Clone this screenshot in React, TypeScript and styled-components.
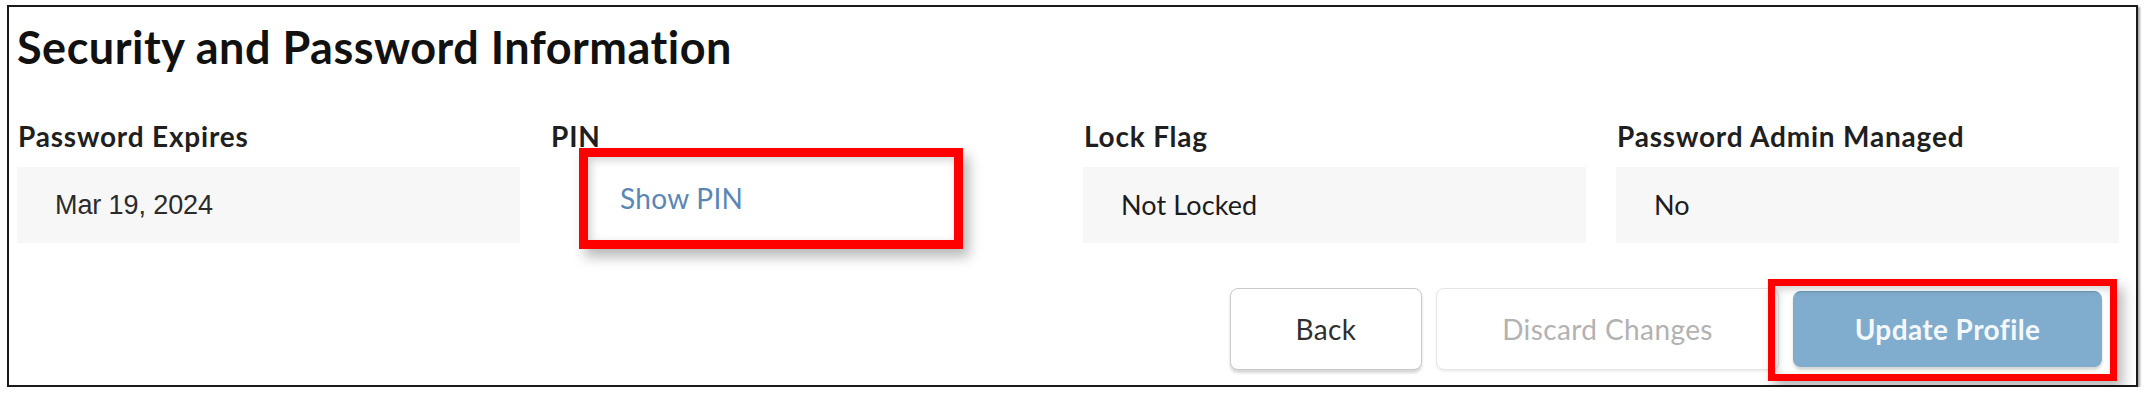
import React from 'react'
import styled, { createGlobalStyle } from 'styled-components'

const GlobalStyle = createGlobalStyle`
  html, body {
    margin: 0;
    padding: 0;
    background: #fff;
  }
  * {
    box-sizing: border-box;
  }
`

const Frame = styled.div`
  margin: 5px 0 0 7px;
  width: 2131px;
  height: 382px;
  border: 2px solid #1a1a1a;
  box-shadow: 2px 2px 2px rgba(0, 0, 0, 0.35);
  padding: 14px 17px 15px 8px;
  display: flex;
  flex-direction: column;
  font-family: Lato, "Noto Sans", sans-serif;
`

const Title = styled.h2`
  margin: 0;
  font-size: 45px;
  line-height: 52px;
  font-weight: 700;
  color: #111;
  letter-spacing: 0.5px;
`

const Fields = styled.div`
  display: grid;
  grid-template-columns: repeat(4, 1fr);
  column-gap: 30px;
  margin-top: 47px;
`

const Field = styled.div`
  display: flex;
  flex-direction: column;
  gap: 15px;
  position: relative;
`

const Label = styled.div`
  font-size: 28px;
  line-height: 32px;
  font-weight: 700;
  color: #1f1f1f;
  letter-spacing: 0.8px;
  padding-left: 1px;
`

const Value = styled.div<{ $arial?: boolean }>`
  height: 76px;
  background: #f7f7f7;
  display: flex;
  align-items: center;
  padding-left: 38px;
  font-family: ${p => (p.$arial ? '"Liberation Sans", Arial, sans-serif' : 'Lato, "Noto Sans", sans-serif')};
  font-size: 27px;
  line-height: 32px;
  color: ${p => (p.$arial ? '#2b2b2b' : '#1c1c1c')};
  letter-spacing: ${p => (p.$arial ? '-0.1px' : '0.1px')};
`

const PinValue = styled.div`
  height: 76px;
  position: relative;
  padding: 15px 0 0 70px;
`

const ShowPin = styled.a`
  font-size: 28px;
  line-height: 32px;
  color: #5a86b6;
  letter-spacing: 0.3px;
  text-decoration: none;
  cursor: pointer;
`

const Highlight = styled.div<{ $left: number; $top: number; $width: number; $height: number; $thick: number }>`
  position: absolute;
  left: ${p => p.$left}px;
  top: ${p => p.$top}px;
  width: ${p => p.$width}px;
  height: ${p => p.$height}px;
  border: ${p => p.$thick}px solid #ff0000;
  box-shadow: 6px 8px 12px rgba(0, 0, 0, 0.28), inset 3px 3px 9px rgba(0, 0, 0, 0.18);
  pointer-events: none;
`

const Actions = styled.div`
  display: flex;
  justify-content: flex-end;
  align-items: center;
  gap: 14px;
  margin-top: auto;
  padding-right: 17px;
`

const Button = styled.button<{ $variant: 'default' | 'disabled' | 'primary' }>`
  height: ${p => (p.$variant === 'primary' ? 76 : 82)}px;
  border-radius: 8px;
  font-family: Lato, "Noto Sans", sans-serif;
  font-size: 28px;
  letter-spacing: 0.4px;
  cursor: pointer;
  background: ${p => (p.$variant === 'primary' ? '#80accd' : '#fff')};
  color: ${p => (p.$variant === 'primary' ? '#f4f8fb' : p.$variant === 'disabled' ? '#b2b2b2' : '#2f2f2f')};
  font-weight: ${p => (p.$variant === 'primary' ? 700 : 400)};
  border: 1px solid ${p => (p.$variant === 'primary' ? '#80accd' : p.$variant === 'disabled' ? '#e4e4e4' : '#c9c9c9')};
  border-top-color: ${p => (p.$variant === 'primary' ? '#6b98b9' : undefined)};
  box-shadow: ${p => (p.$variant === 'disabled' ? '0 2px 2px rgba(0,0,0,0.06)' : '0 3px 3px rgba(0,0,0,0.16)')};
`

const PrimaryWrap = styled.div`
  position: relative;
  display: flex;
`

export default function App() {
  return (
    <>
      <GlobalStyle />
      <Frame>
        <Title>Security and Password Information</Title>
        <Fields>
          <Field>
            <Label>Password Expires</Label>
            <Value $arial>Mar 19, 2024</Value>
          </Field>
          <Field>
            <Label>PIN</Label>
            <PinValue>
              <ShowPin>Show PIN</ShowPin>
              <Highlight $left={29} $top={-19} $width={384} $height={101} $thick={9} />
            </PinValue>
          </Field>
          <Field>
            <Label>Lock Flag</Label>
            <Value>Not Locked</Value>
          </Field>
          <Field>
            <Label>Password Admin Managed</Label>
            <Value>No</Value>
          </Field>
        </Fields>
        <Actions>
          <Button $variant="default" style={{ width: 192 }}>Back</Button>
          <Button $variant="disabled" style={{ width: 343 }}>Discard Changes</Button>
          <PrimaryWrap>
            <Button $variant="primary" style={{ width: 309 }}>Update Profile</Button>
            <Highlight $left={-25} $top={-12} $width={349} $height={102} $thick={7} />
          </PrimaryWrap>
        </Actions>
      </Frame>
    </>
  )
}
